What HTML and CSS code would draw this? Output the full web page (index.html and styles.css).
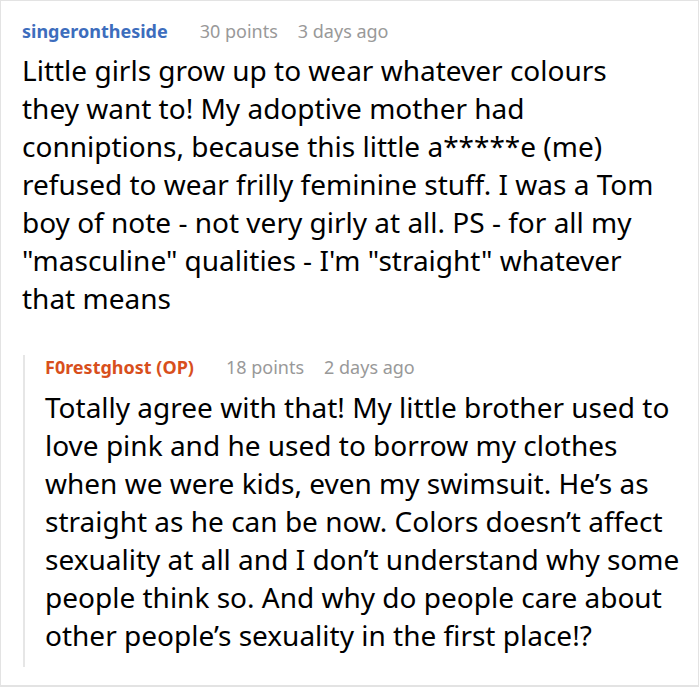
FILE: index.html
```html
<!DOCTYPE html>
<html>
<head>
<meta charset="utf-8">
<link rel="stylesheet" href="styles.css">
</head>
<body>
<div class="thread">
  <div class="comment">
    <div class="meta">
      <span class="user">singerontheside</span>
      <span class="info">30 points</span>
      <span class="info">3 days ago</span>
    </div>
    <p class="text">Little girls grow up to wear whatever colours they want to! My adoptive mother had conniptions, because this little a*****e (me) refused to wear frilly feminine stuff. I was a Tom boy of note - not very girly at all. PS - for all my "masculine" qualities - I'm "straight" whatever that means</p>
  </div>
  <div class="reply">
    <div class="meta">
      <span class="user op">F0restghost (OP)</span>
      <span class="info">18 points</span>
      <span class="info">2 days ago</span>
    </div>
    <p class="text">Totally agree with that! My little brother used to love pink and he used to borrow my clothes when we were kids, even my swimsuit. He’s as straight as he can be now. Colors doesn’t affect sexuality at all and I don’t understand why some people think so. And why do people care about other people’s sexuality in the first place!?</p>
  </div>
</div>
</body>
</html>
```
FILE: styles.css
```css
html, body {
  margin: 0;
  padding: 0;
  background: #fff;
}
.thread {
  box-sizing: border-box;
  width: 699px;
  height: 687px;
  border: 1px solid #e3e3e3;
  border-bottom-width: 2px;
  padding: 18px 2px 0 21px;
  font-family: "Noto Sans", sans-serif;
  overflow: hidden;
}
.meta {
  display: flex;
  align-items: baseline;
  gap: 20px;
  font-size: 18px;
  line-height: 24px;
}
.meta .user {
  font-weight: 700;
  color: #3d6dbd;
  margin-right: 12px;
}
.meta .user.op {
  color: #d84f1c;
}
.meta .info {
  color: #999;
}
.text {
  margin: 0;
  color: #000;
  font-size: 28px;
  line-height: 38px;
}
.comment .text {
  margin-top: 8px;
  margin-right: 34px;
}
.reply {
  margin-top: 50px;
  margin-left: 1px;
  border-left: 2px solid #e6e6e6;
  padding: 0 0 13px 20px;
}
.reply .meta {
  margin-top: -12px;
}
.reply .text {
  margin-top: 9px;
  margin-right: 10px;
}
```
